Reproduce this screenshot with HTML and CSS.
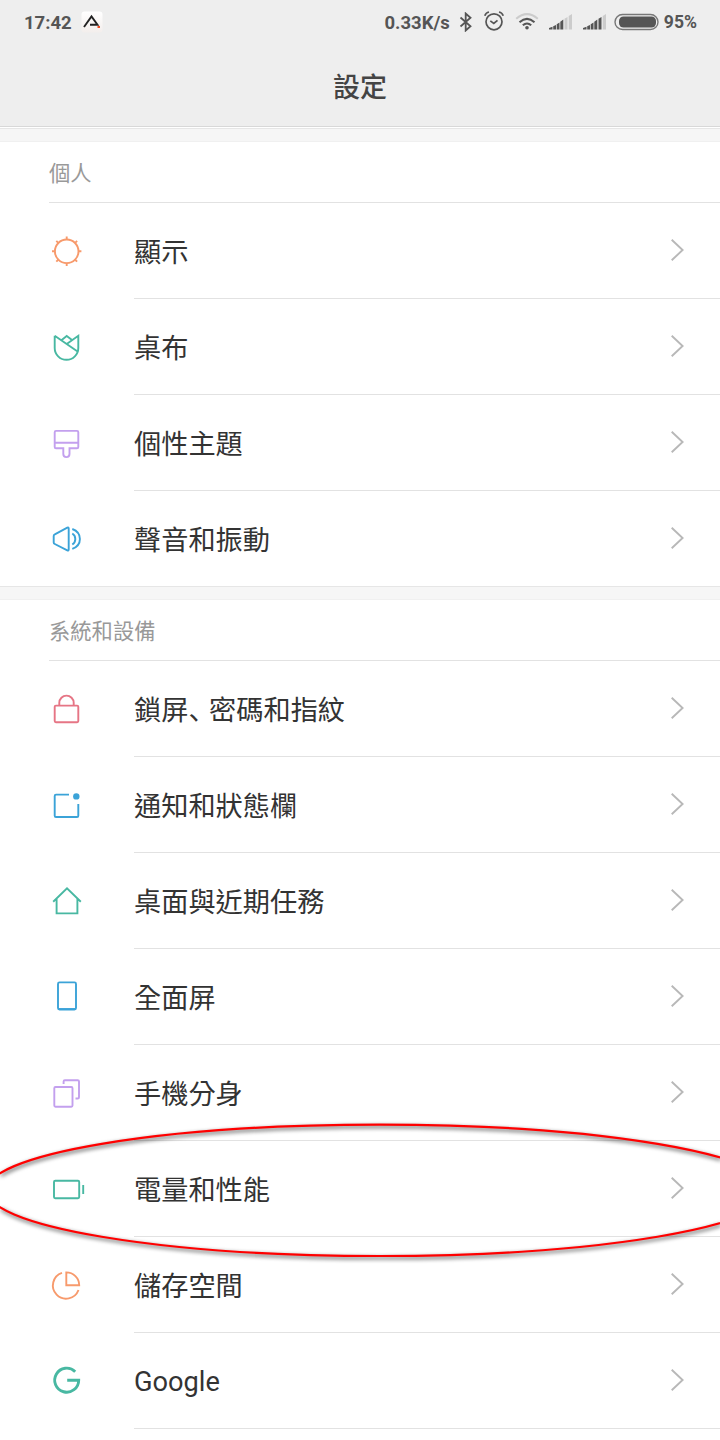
FILE: index.html
```html
<!DOCTYPE html>
<html lang="zh-Hant">
<head>
<meta charset="utf-8">
<title>設定</title>
<link rel="stylesheet" href="styles.css">
</head>
<body>
<svg class="defs" width="0" height="0"><symbol id="chevron" viewBox="0 0 16 24"><path d="M2.700 1.700 13.600 12 2.700 22.300"/></symbol></svg>
<div class="screen">
  <header class="header">
    <div class="status">
      <span class="clock">17:42</span>
      <svg class="app" width="22" height="22" viewBox="0 0 22 22"><defs><linearGradient id="tile" x2="0" y2="1"><stop offset="0" stop-color="#fff"/><stop offset="1" stop-color="#f3eeec"/></linearGradient></defs><rect x=".5" y=".5" width="21" height="21" rx="3" fill="url(#tile)"/><path d="M3 16 10.500 5.500 16.500 13.800H9" fill="none" stroke="#222" stroke-width="1.900"/><rect x="16.500" y="15" width="2.500" height="2" fill="#f04a20"/></svg>
      <span class="speed">0.33K/s</span>
      <svg class="bt" width="14" height="20" viewBox="0 0 14 20"><path d="m1.500 5.500 10 8.800L6.700 18.500V1.500l4.800 4.200-10 8.800" fill="none" stroke="#555" stroke-width="1.800"/></svg>
      <svg class="alarm" width="22" height="22" viewBox="0 0 22 22" fill="none" stroke="#555" stroke-width="1.700"><circle cx="11" cy="11.800" r="8"/><path d="m7.300 10.800 3.500 2.700 3.700-3.200M1.800 5.800Q2.800 2.700 6 2M20.200 5.800Q19.200 2.700 16 2"/></svg>
      <svg class="wifi" width="24" height="20" viewBox="0 0 24 20" fill="none" stroke="#555" stroke-width="2"><path d="M1.200 6.800Q12-2.500 22.800 6.800" stroke="#ccc"/><path d="M4.500 10.300Q12 3.500 19.500 10.300M7.800 13.300Q12 9.600 16.200 13.300"/><circle cx="12" cy="15.800" r="1.800" fill="#555" stroke="none"/></svg>
      <svg class="signal" width="24" height="16" viewBox="0 0 24 16"><path fill="#555" d="M0 15.500V14L3.500 12.800V15.500ZM4.200 15.500V12.300L7 11V15.500ZM7.700 15.500V10.300L10.500 8.500V15.500ZM11.300 15.500V7.800L14.300 5.500V15.500Z"/><path fill="#ccc" d="M15.500 15.500V4.800L18.500 3V15.500ZM19.700 15.500V2L23 0V15.500Z"/></svg>
      <svg class="signal" width="24" height="16" viewBox="0 0 24 16"><path fill="#555" d="M0 15.500V14L3.500 12.800V15.500ZM4.200 15.500V12.300L7 11V15.500ZM7.700 15.500V10.300L10.500 8.500V15.500ZM11.300 15.500V7.800L14.300 5.500V15.500ZM15.500 15.500V4.800L18.500 3V15.500Z"/><path fill="#ccc" d="M19.700 15.500V2L23 0V15.500Z"/></svg>
      <svg class="cell" width="45" height="18" viewBox="0 0 45 18"><rect x="1" y="1.500" width="43" height="15" rx="7.500" fill="none" stroke="#777" stroke-width="1.400"/><rect x="5" y="3.500" width="37" height="11" rx="4.500" fill="#555"/></svg>
      <span class="percent">95%</span>
    </div>
    <h1 class="title">設定</h1>
  </header>
  <div class="gap first"></div>
  <section>
    <h2 class="group">個人</h2>
    <div class="row orange"><svg class="icon" viewBox="0 0 40 40"><circle cx="20.700" cy="20.300" r="11.800"/><path d="M20.700 5.600v3.200M20.700 31.800V35M6 20.300h3.200M32.200 20.300h3.200M10.300 9.900l2.200 2.200M28.900 28.500l2.200 2.200M31.100 9.900l-2.200 2.200M12.500 28.500l-2.200 2.200"/></svg><span class="label">顯示</span><svg class="chev"><use href="#chevron"/></svg></div>
    <div class="row green"><svg class="icon" viewBox="0 0 40 40"><path d="M8.700 8.800V21a11.800 11.800 0 0 0 23.600 0V8.800L20.700 17M8.700 8.800 32.300 25M15.700 13 20.700 9 26 13"/></svg><span class="label">桌布</span><svg class="chev"><use href="#chevron"/></svg></div>
    <div class="row purple"><svg class="icon" viewBox="0 0 40 40"><path d="M10 7.900H31a1.300 1.300 0 0 1 1.300 1.300V24a1.300 1.300 0 0 1-1.300 1.300H23.500V31a3.100 3.100 0 0 1-6.200 0V25.300H10A1.300 1.300 0 0 1 8.700 24V9.200A1.300 1.300 0 0 1 10 7.900ZM8.700 19.700H32.300"/></svg><span class="label">個性主題</span><svg class="chev"><use href="#chevron"/></svg></div>
    <div class="row blue last"><svg class="icon" viewBox="0 0 40 40"><path d="M8.800 15.300 21.300 8.600Q22.700 8 22.700 9.400V30.500Q22.700 32 21.300 31.300L8.800 25Q7.700 24.500 7.700 23.500V17Q7.700 15.800 8.800 15.300ZM26.300 14.500Q29.300 16.300 29.300 20T26.300 25.500M26.300 10Q33.900 12.800 33.900 20T26.300 29.800"/></svg><span class="label">聲音和振動</span><svg class="chev"><use href="#chevron"/></svg></div>
  </section>
  <div class="gap"></div>
  <section>
    <h2 class="group">系統和設備</h2>
    <div class="row red"><svg class="icon" viewBox="0 0 40 40"><rect x="8.700" y="16.600" width="23.600" height="16.700" rx="1.200"/><path d="M13.300 16.500V13.800a7.200 7.200 0 0 1 14.400 0V16.500"/></svg><span class="label">鎖屏<span class="comma" lang="zh-Hans">、</span>密碼和指紋</span><svg class="chev"><use href="#chevron"/></svg></div>
    <div class="row blue"><svg class="icon" viewBox="0 0 40 40"><path d="M23 9.600H10Q8.700 9.600 8.700 10.900V30.700Q8.700 32 10 32H31Q32.300 32 32.300 30.700V19"/><circle class="dot" cx="30.300" cy="11.400" r="3.200"/></svg><span class="label">通知和狀態欄</span><svg class="chev"><use href="#chevron"/></svg></div>
    <div class="row green"><svg class="icon" viewBox="0 0 40 40"><path d="M7.200 20.700 21 7.300 34.800 20.700M10.600 18V32.400H31.400V18"/></svg><span class="label">桌面與近期任務</span><svg class="chev"><use href="#chevron"/></svg></div>
    <div class="row blue"><svg class="icon" viewBox="0 0 40 40"><rect x="12" y="5.400" width="18" height="27.200" rx="1.500"/><path d="M12.500 32H29.500"/></svg><span class="label">全面屏</span><svg class="chev"><use href="#chevron"/></svg></div>
    <div class="row purple"><svg class="icon" viewBox="0 0 40 40"><rect x="8.300" y="14" width="18.200" height="19.700" rx="1.200"/><path d="M17.600 11V8.600Q17.600 7.300 18.900 7.300H31.700Q33 7.300 33 8.600V24.200Q33 25.500 31.700 25.500H29.500"/></svg><span class="label">手機分身</span><svg class="chev"><use href="#chevron"/></svg></div>
    <div class="row green"><svg class="icon" viewBox="0 0 40 40"><rect x="8" y="11.700" width="25.200" height="17.600" rx="1.200"/><path d="M37.200 16V25"/></svg><span class="label">電量和性能</span><svg class="chev"><use href="#chevron"/></svg></div>
    <div class="row orange"><svg class="icon" viewBox="0 0 40 40"><path d="M16 7.900A13.200 13.200 0 1 0 32.500 25M20.300 7.400V20.200H33.200A12.900 12.900 0 0 0 20.300 7.400Z"/></svg><span class="label">儲存空間</span><svg class="chev"><use href="#chevron"/></svg></div>
    <div class="row green"><svg class="icon" viewBox="0 0 40 40"><path class="thick" d="M29.200 10.700A12 12 0 1 0 32.700 19.200H21.200"/></svg><span class="label latin">Google</span><svg class="chev"><use href="#chevron"/></svg></div>
  </section>
  <svg class="marker" width="720" height="160" viewBox="0 1110 720 160"><ellipse cx="379.600" cy="1190.300" rx="393" ry="65.700"/></svg>
</div>
</body>
</html>
```
FILE: styles.css
```css
body {
  margin: 0;
  background: #fff;
}

.defs {
  position: absolute;
}

.screen {
  position: relative;
  width: 720px;
  height: 1440px;
  overflow: hidden;
  background: #fff;
  color: #333;
  font-family: Roboto, "Noto Sans CJK TC", sans-serif;
}

.header {
  box-sizing: border-box;
  height: 127px;
  background: #eee;
  border-bottom: 1px solid #d8d8d8;
}

.status {
  display: flex;
  align-items: center;
  height: 44px;
  padding: 0 23px 0 24px;
  color: #555;
  font-size: 18.500px;
  font-weight: 700;
}

.status svg {
  flex: none;
}

.clock,
.speed,
.percent {
  padding-top: 2px;
}

.percent {
  padding-top: 0;
}

.app {
  margin: -1px auto 0 9px;
}

.bt {
  margin-left: 10px;
}

.speed {
  margin-right: -1px;
}

.alarm {
  margin-left: 10px;
  margin-top: -2px;
}

.wifi {
  margin-left: 10px;
}

.signal {
  margin-left: 10px;
}

.cell {
  margin-left: 7px;
}

.percent {
  margin-left: 5px;
  font-size: 17.600px;
}

.title {
  margin: 0;
  padding-top: 24px;
  font-size: 27px;
  line-height: 40px;
  font-weight: 500;
  text-align: center;
  color: #444;
}

.gap {
  box-sizing: border-box;
  height: 13px;
  background: #f6f6f6;
  border-bottom: 1px solid #f0f0f0;
}

.first {
  height: 14px;
  margin-top: 1px;
  border-top: 1px solid #e6e6e6;
}

.group {
  box-sizing: border-box;
  height: 61px;
  margin: 0 0 0 49px;
  border-bottom: 1px solid #e2e2e2;
  color: #999;
  font-size: 21.300px;
  font-weight: 400;
  line-height: 63px;
}

.row {
  display: flex;
  height: 96px;
  padding-left: 46px;
}

.icon {
  flex: none;
  width: 40px;
  height: 40px;
  margin: 28px 48px 0 0;
  fill: none;
  stroke: currentColor;
  stroke-width: 1.900;
}

.dot {
  fill: currentColor;
  stroke: none;
}

.thick {
  stroke-width: 2.900;
}

.label {
  flex: 1;
  box-sizing: border-box;
  height: 96px;
  border-bottom: 1px solid #e2e2e2;
  color: #333;
  font-size: 27.200px;
  line-height: 101px;
  white-space: nowrap;
}

.latin {
  line-height: 99px;
}

.comma {
  font-family: "Noto Sans CJK SC", sans-serif;
  letter-spacing: -6.500px;
  line-height: 1;
}

.chev {
  box-sizing: content-box;
  width: 16px;
  height: 24px;
  padding: 35px 35px 36px 0;
  border-bottom: 1px solid #e2e2e2;
  fill: none;
  stroke: #b8b8b8;
  stroke-width: 1.900;
}

.last {
  border-bottom: 1px solid #e6e6e6;
  height: 95px;
}

.last .label,
.last .chev {
  border-bottom: 0;
}

.orange {
  color: #f79a6c;
}

.green {
  color: #48b8a2;
}

.purple {
  color: #c3a0ee;
}

.blue {
  color: #3ba3d8;
}

.red {
  color: #e67585;
}

/* Hand-drawn highlight lying over the battery row */
.marker {
  position: absolute;
  left: 0;
  top: 1110px;
  fill: none;
  stroke: #f00;
  stroke-width: 2.200;
  filter: drop-shadow(1px 2.500px 2px rgba(0, 0, 0, 0.75));
}
```
